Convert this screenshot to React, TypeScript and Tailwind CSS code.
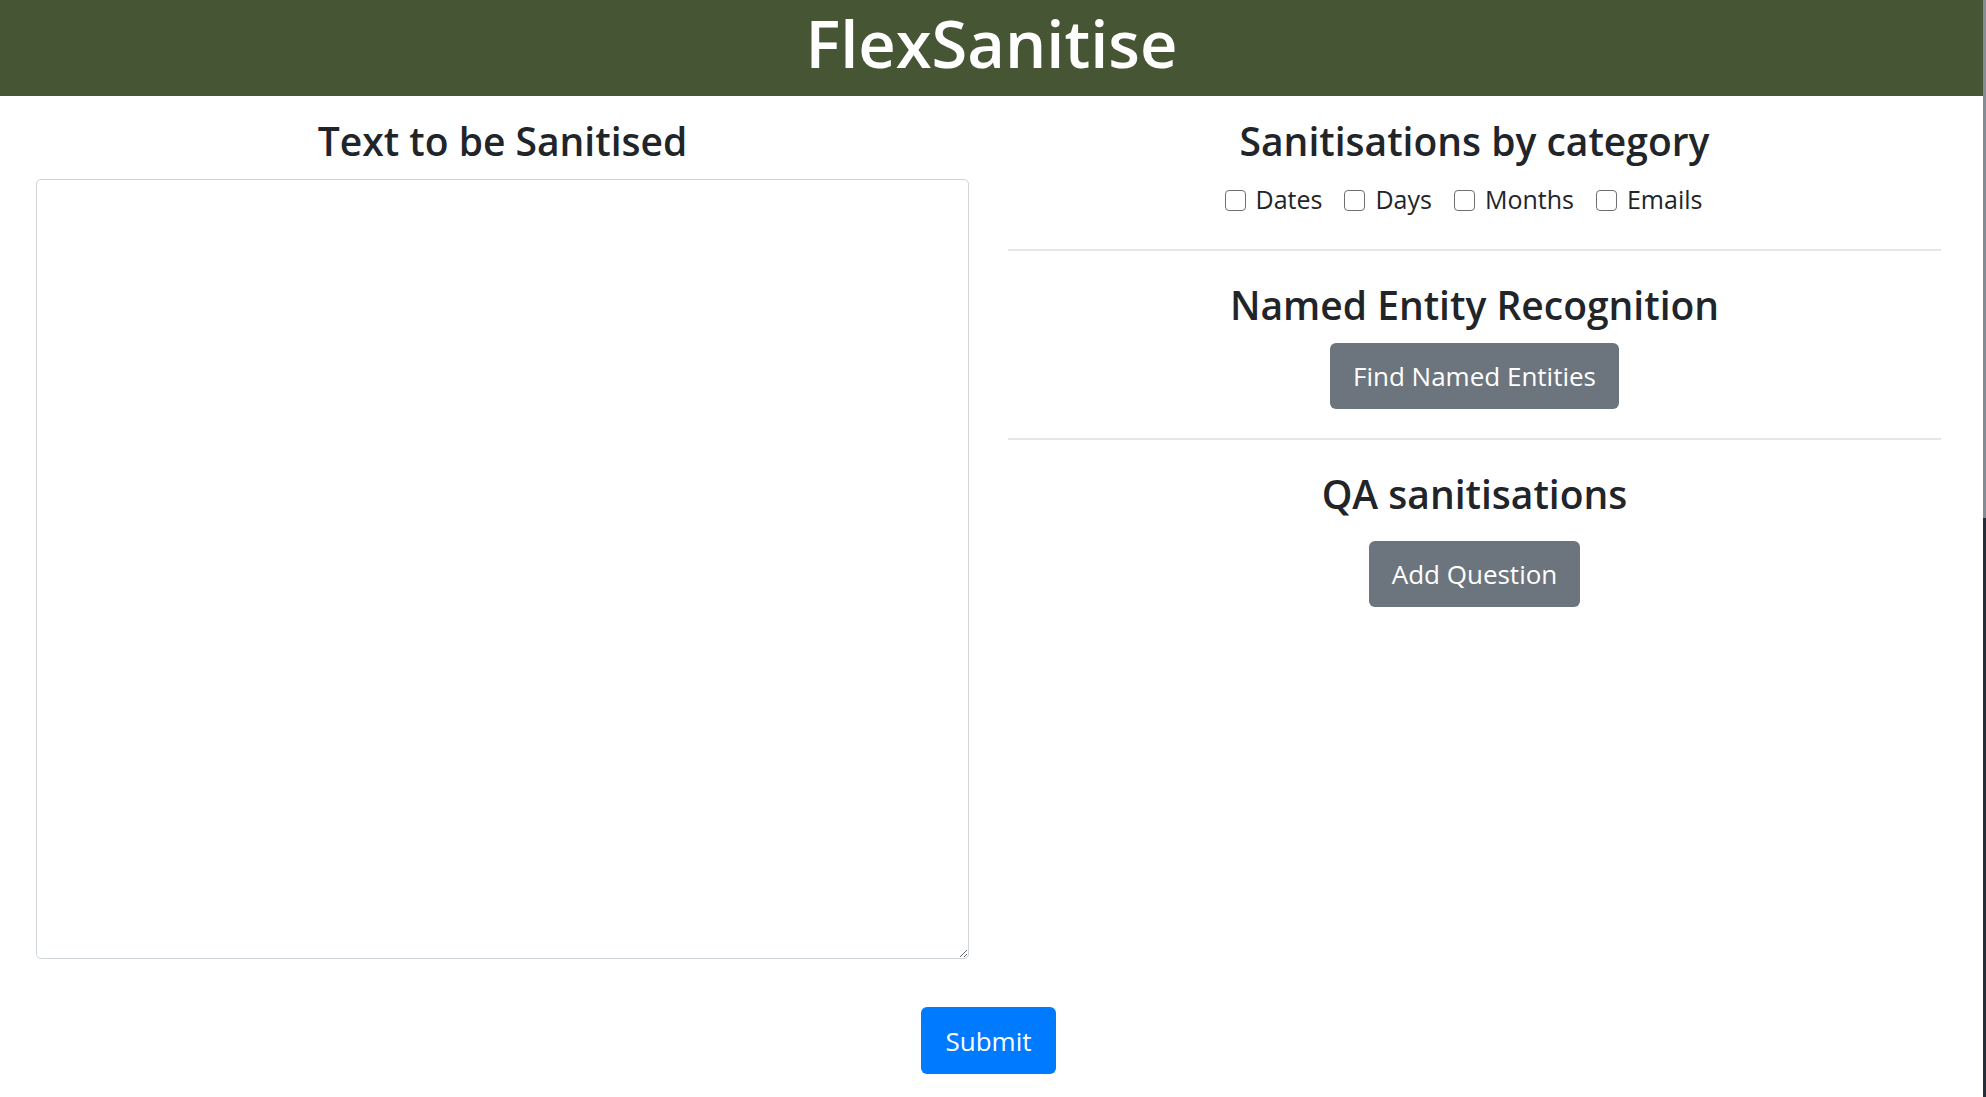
import React from 'react'

const categories = ['Dates', 'Days', 'Months', 'Emails']

function Heading({ children }: { children: React.ReactNode }) {
  return (
    <h2 className="text-center text-[39px] font-semibold leading-[48px] text-[#212529]">
      {children}
    </h2>
  )
}

function GreyButton({ children }: { children: React.ReactNode }) {
  return (
    <button className="h-[66px] rounded-[6px] bg-[#6c757d] px-[23px] text-[26px] leading-none text-white">
      {children}
    </button>
  )
}

export default function App() {
  return (
    <div
      className="flex min-h-screen w-full bg-white"
      style={{ fontFamily: '"Open Sans", "Noto Sans", sans-serif' }}
    >
      <div className="flex w-[1983px] flex-col">
        <header className="flex h-[96px] items-start justify-center bg-[#465634] pt-[11px]">
          <h1 className="text-[65px] font-semibold leading-none text-white">FlexSanitise</h1>
        </header>

        <div className="grid grid-cols-2 gap-x-[39px] pl-[36px] pr-[42px]">
          <div className="flex flex-col pt-[21px]">
            <Heading>Text to be Sanitised</Heading>
            <textarea className="mt-[14px] h-[780px] w-full rounded-[5px] border border-[#ced4da] bg-white p-3 text-[25px] text-[#495057] outline-none" />
          </div>

          <div className="flex flex-col items-stretch pt-[21px]">
            <Heading>Sanitisations by category</Heading>
            <div className="mt-[16px] flex h-[38px] items-center justify-center">
              {categories.map((c) => (
                <label key={c} className="mr-[22px] flex items-center text-[25px] text-[#212529]">
                  <input
                    type="checkbox"
                    className="mr-[10px] h-[21px] w-[21px] appearance-none rounded-[4px] border border-[#6f6f6f] bg-white"
                  />
                  {c}
                </label>
              ))}
            </div>

            <hr className="mt-[30px] border-0 border-t-2 border-[#e6e6e6]" />

            <div className="mt-[30px]">
              <Heading>Named Entity Recognition</Heading>
            </div>
            <div className="mt-[14px] flex justify-center">
              <GreyButton>Find Named Entities</GreyButton>
            </div>

            <hr className="mt-[29px] border-0 border-t-2 border-[#e6e6e6]" />

            <div className="mt-[30px]">
              <Heading>QA sanitisations</Heading>
            </div>
            <div className="mt-[23px] flex justify-center">
              <GreyButton>Add Question</GreyButton>
            </div>
          </div>

          <div className="col-span-2 mt-[48px] flex justify-center">
            <button className="h-[67px] rounded-[6px] bg-[#007bff] px-[24px] text-[26px] leading-none text-white">
              Submit
            </button>
          </div>
        </div>
      </div>

      <div className="flex w-[3px] flex-col">
        <div className="h-[518px] bg-[#868c94]" />
        <div className="flex-1 bg-[#262c38]" />
      </div>
    </div>
  )
}
